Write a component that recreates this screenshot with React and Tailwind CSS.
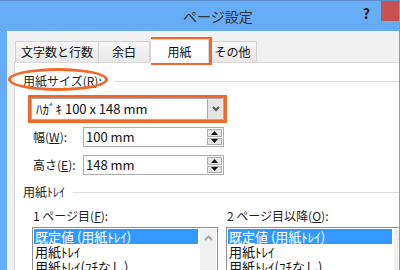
import { useState } from "react";

const font = { fontFamily: '"Noto Sans CJK JP", "Noto Sans", sans-serif' };

const tabs = [
  { label: "文字数と行数", w: "w-[84px]" },
  { label: "余白", w: "w-[52px]" },
  { label: "用紙", w: "w-[59px]" },
  { label: "その他", w: "w-[49px]" },
];

const trays = ["既定値 (用紙ﾄﾚｲ)", "用紙ﾄﾚｲ", "用紙ﾄﾚｲ(ﾌﾁなし)"];

function Spin() {
  return (
    <div className="ml-auto mr-[1px] flex h-full w-[15px] flex-col gap-[1px] py-[1px]">
      <div className="flex flex-1 items-center justify-center border border-[#adadad] bg-[#e6e6e6]">
        <svg width="7" height="4" viewBox="0 0 7 4">
          <path d="M0 4 L3.5 0 L7 4 Z" fill="#111" />
        </svg>
      </div>
      <div className="flex flex-1 items-center justify-center border border-[#adadad] bg-[#e6e6e6]">
        <svg width="7" height="4" viewBox="0 0 7 4">
          <path d="M0 0 L3.5 4 L7 0 Z" fill="#111" />
        </svg>
      </div>
    </div>
  );
}

function SizeRow({ label, hot, rest, value }) {
  return (
    <div className="flex items-center">
      <div className="ml-[18px] w-[50px] text-[12px] leading-[16px] text-[#222]">
        {label}(<span className="underline">{hot}</span>){rest}
      </div>
      <div className="flex h-[20px] w-[141px] items-center border border-[#acacac] bg-white">
        <span className="pl-[2px] text-[13px] leading-[16px] text-[#111]">{value}</span>
        <Spin />
      </div>
    </div>
  );
}

function TrayList({ width }) {
  const [sel, setSel] = useState(0);
  return (
    <div className={`flex h-[60px] shrink-0 border border-[#8f8f8f] bg-white p-[1px] ${width}`}>
      <div className="flex-1">
        {trays.map((t, i) => (
          <div
            key={t}
            onClick={() => setSel(i)}
            className={`h-[15px] pl-[1px] text-[13px] leading-[15px] ${
              sel === i ? "bg-[#3399ff] text-white" : "text-[#111]"
            }`}
          >
            {t}
          </div>
        ))}
      </div>
      <div className="ml-[2px] flex w-[16px] justify-center bg-[#f0f0f0] pt-[6px]">
        <svg width="9" height="6" viewBox="0 0 9 6">
          <path d="M1 5 L4.5 1.5 L8 5" stroke="#a6a6a6" strokeWidth="2" fill="none" />
        </svg>
      </div>
    </div>
  );
}

export default function App() {
  return (
    <div
      className="relative flex h-[270px] w-[400px] flex-col overflow-hidden border-r border-[#9a9a9a] bg-[#66adf5]"
      style={font}
    >
      {/* TITLE BAR */}
      <div className="flex h-[31px] shrink-0 items-start border-t border-[#5b8fcc]">
        <div className="ml-[183px] mt-[5px] text-[14px] leading-[20px] text-[#333]">ページ設定</div>
        <div className="ml-auto mt-[4px] text-[14px] font-bold leading-[16px] text-[#222]">?</div>
        <div className="ml-[11px] h-[20px] w-[18px] bg-[#c75050]" />
      </div>

      {/* BODY */}
      <div className="ml-[7px] flex flex-1 flex-col bg-[#f0f0f0]">
        {/* TABS */}
        <div className="ml-[9px] mt-[8px] flex h-[23px] items-end">
          {tabs.map((t, i) =>
            i === 2 ? (
              <div
                key={t.label}
                className={`relative z-10 -mb-[1px] flex h-[24px] items-center justify-center border border-b-0 border-[#d9d9d9] bg-white text-[12px] text-[#111] ${t.w}`}
              >
                {t.label}
              </div>
            ) : (
              <div
                key={t.label}
                className={`-ml-[1px] flex h-[21px] items-center justify-center border border-b-0 border-[#d4d4d4] bg-gradient-to-b from-[#f6f6f6] to-[#e9e9e9] text-[12px] text-[#111] ${t.w}`}
              >
                {t.label}
              </div>
            )
          )}
        </div>

        {/* PANEL */}
        <div className="ml-[7px] flex flex-1 flex-col border-l border-t border-[#d9d9d9] bg-white">
          <div className="mt-[10px] flex items-center">
            <div className="ml-[8px] text-[12px] leading-[16px] text-[#222]">
              用紙サイズ(<span className="underline">R</span>):
            </div>
            <div className="ml-[12px] h-px flex-1 bg-[#dcdcdc]" />
          </div>

          <div className="ml-[16px] mt-[9px] flex h-[22px] w-[193px] items-center border border-[#acacac] bg-white">
            <span className="pl-[4px] text-[13px] leading-[16px] text-[#111]">ﾊｶﾞｷ 100 x 148 mm</span>
            <div className="ml-auto flex h-full w-[16px] items-center justify-center border-l border-[#acacac] bg-[#e5e5e5]">
              <svg width="8" height="6" viewBox="0 0 8 6">
                <path d="M1 1 L4 4 L7 1" stroke="#555" strokeWidth="2" fill="none" />
              </svg>
            </div>
          </div>

          <div className="mt-[7px] flex flex-col gap-[8px]">
            <SizeRow label="幅" hot="W" rest=":" value="100 mm" />
            <SizeRow label="高さ" hot="E" rest=":" value="148 mm" />
          </div>

          <div className="mt-[9px] flex items-center">
            <div className="ml-[8px] text-[12px] leading-[16px] text-[#222]">用紙ﾄﾚｲ</div>
            <div className="ml-[8px] h-px flex-1 bg-[#dcdcdc]" />
          </div>

          <div className="mt-[8px] flex text-[12px] leading-[16px] text-[#222]">
            <div className="ml-[18px] w-[194px]">
              1 ページ目(<span className="underline">F</span>):
            </div>
            <div>
              2 ページ目以降(<span className="underline">O</span>):
            </div>
          </div>

          <div className="ml-[17px] mt-[3px] flex gap-[8px]">
            <TrayList width="w-[186px]" />
            <TrayList width="w-[186px]" />
          </div>
        </div>
      </div>

      {/* ORANGE ANNOTATIONS */}
      <div className="pointer-events-none absolute left-[151px] top-[37px] h-[28px] w-[61px] border-[3px] border-[#f0692a]" />
      <div className="pointer-events-none absolute left-[8px] top-[68px] h-[23px] w-[100px] rounded-[50%] border-[3px] border-[#f0692a]" />
      <div className="pointer-events-none absolute left-[28px] top-[95px] h-[28px] w-[199px] border-[3px] border-[#f0692a]" />
    </div>
  );
}
